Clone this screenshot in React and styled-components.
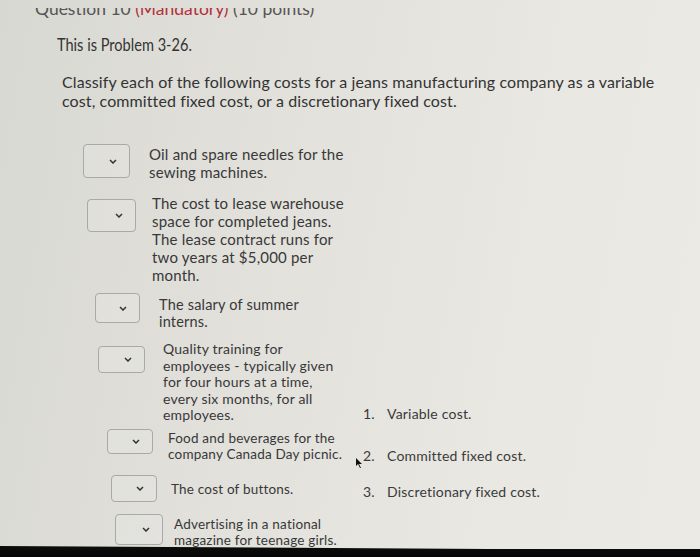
import React from "react";
import styled, { createGlobalStyle } from "styled-components";

const GlobalStyle = createGlobalStyle`
  body {
    margin: 0;
    font-family: Lato, "Open Sans", sans-serif;
  }
`;

const Screen = styled.div`
  position: relative;
  width: 700px;
  height: 557px;
  overflow: hidden;
  display: flex;
  flex-direction: column;
  color: #3a3a3a;
  background: linear-gradient(100deg, #d8d8d2 0%, #e1e0db 35%, #e9e8e3 75%, #ebeae5 100%);
`;

const Content = styled.div`
  flex: 1;
  overflow: hidden;
`;

/* heading scrolled mostly under the top edge of the pane */
const HeadingClip = styled.div`
  margin: 8px 0 0 35px;
  height: 10px;
  overflow: hidden;
`;

const Heading = styled.div`
  margin-top: -8px;
  font-size: 17.5px;
  line-height: 17px;
  color: #555;
  white-space: nowrap;
  span {
    color: #b3303a;
  }
`;

const Title = styled.p`
  margin: 16px 0 0 57px;
  font-size: 18px;
  line-height: 20px;
  color: #333;
  transform: scaleX(0.81);
  transform-origin: left center;
  white-space: nowrap;
`;

const Prompt = styled.p`
  margin: 18px 0 0 62px;
  font-size: 16px;
  line-height: 19px;
  color: #333;
  letter-spacing: 0.1px;
`;

const List = styled.div`
  margin-top: 34px;
`;

const Row = styled.div`
  display: grid;
  grid-template-columns: 363px 1fr;
  margin-top: ${(p) => p.$gap}px;
`;

const Question = styled.div`
  display: flex;
  align-items: flex-start;
  padding-left: ${(p) => p.$x}px;
`;

const Select = styled.div`
  flex: none;
  display: flex;
  align-items: center;
  justify-content: flex-end;
  box-sizing: border-box;
  width: ${(p) => p.$w}px;
  height: ${(p) => p.$h}px;
  margin-top: ${(p) => p.$dy}px;
  padding-right: 12px;
  border: 1px solid #a9a9a5;
  border-radius: 4px;
  background: rgba(255, 255, 255, 0.12);
  svg {
    display: block;
  }
`;

const Text = styled.div`
  margin-left: ${(p) => p.$ml}px;
  margin-top: ${(p) => p.$dy}px;
  font-size: ${(p) => p.$size}px;
  line-height: ${(p) => p.$lh}px;
  letter-spacing: 0.2px;
  white-space: nowrap;
  color: #383838;
`;

const Choice = styled.div`
  align-self: end;
  display: flex;
  margin-bottom: ${(p) => p.$dy}px;
  font-size: 14px;
  line-height: 16px;
  letter-spacing: 0.2px;
  color: #3a3a3a;
  b {
    width: 24px;
    font-weight: 400;
  }
`;

const Bar = styled.div`
  height: 20px;
  margin-top: -20px;
  background: linear-gradient(180deg, #141414, #050505);
  clip-path: polygon(0 9px, 70% 12px, 100% 12px, 100% 100%, 0 100%);
  position: relative;
`;

const Pointer = styled.svg`
  position: absolute;
  left: 355px;
  top: 458px;
`;

const Chevron = () => (
  <svg width="8" height="5" viewBox="0 0 8 5">
    <path d="M1 1l3 3 3-3" fill="none" stroke="#333" strokeWidth="1.5" />
  </svg>
);

const rows = [
  { x: 83, w: 47, h: 34, bdy: 0, ml: 19, tdy: 1, size: 15, lh: 18, gap: 0,
    lines: ["Oil and spare needles for the", "sewing machines."] },
  { x: 87, w: 49, h: 33, bdy: 5, ml: 16, tdy: 0, size: 15, lh: 18, gap: 13,
    lines: ["The cost to lease warehouse", "space for completed jeans.", "The lease contract runs for", "two years at $5,000 per", "month."] },
  { x: 95, w: 45, h: 30, bdy: 0, ml: 19, tdy: 3, size: 14.5, lh: 17, gap: 9,
    lines: ["The salary of summer", "interns."] },
  { x: 98, w: 47, h: 27, bdy: 5, ml: 18, tdy: 0, size: 14, lh: 16.5, gap: 11,
    lines: ["Quality training for", "employees - typically given", "for four hours at a time,", "every six months, for all", "employees."],
    choice: { n: "1.", t: "Variable cost.", dy: 2 } },
  { x: 107, w: 46, h: 25, bdy: 0, ml: 15, tdy: 1, size: 13.5, lh: 16, gap: 5,
    lines: ["Food and beverages for the", "company Canada Day picnic."],
    choice: { n: "2.", t: "Committed fixed cost.", dy: -2 } },
  { x: 111, w: 46, h: 27, bdy: 0, ml: 14, tdy: 6, size: 13.5, lh: 16, gap: 13,
    lines: ["The cost of buttons."],
    choice: { n: "3.", t: "Discretionary fixed cost.", dy: 2 } },
  { x: 115, w: 48, h: 31, bdy: 0, ml: 11, tdy: 2, size: 13.5, lh: 16, gap: 12,
    lines: ["Advertising in a national", "magazine for teenage girls."] },
];

export default function App() {
  return (
    <Screen>
      <GlobalStyle />
      <Content>
        <HeadingClip>
          <Heading>
            Question 10 <span>(Mandatory)</span> (10 points)
          </Heading>
        </HeadingClip>
        <Title>This is Problem 3-26.</Title>
        <Prompt>
          Classify each of the following costs for a jeans manufacturing company as a variable
          <br />
          cost, committed fixed cost, or a discretionary fixed cost.
        </Prompt>
        <List>
          {rows.map((r, i) => (
            <Row key={i} $gap={r.gap}>
              <Question $x={r.x}>
                <Select $w={r.w} $h={r.h} $dy={r.bdy}>
                  <Chevron />
                </Select>
                <Text $ml={r.ml} $dy={r.tdy} $size={r.size} $lh={r.lh}>
                  {r.lines.map((l) => (
                    <div key={l}>{l}</div>
                  ))}
                </Text>
              </Question>
              {r.choice && (
                <Choice $dy={r.choice.dy}>
                  <b>{r.choice.n}</b>
                  {r.choice.t}
                </Choice>
              )}
            </Row>
          ))}
        </List>
      </Content>
      <Bar />
      <Pointer width="8" height="10" viewBox="0 0 8 10">
        <path d="M1 0l6 6H4l2 4-1 0-2-4-2 2z" fill="#111" />
      </Pointer>
    </Screen>
  );
}
